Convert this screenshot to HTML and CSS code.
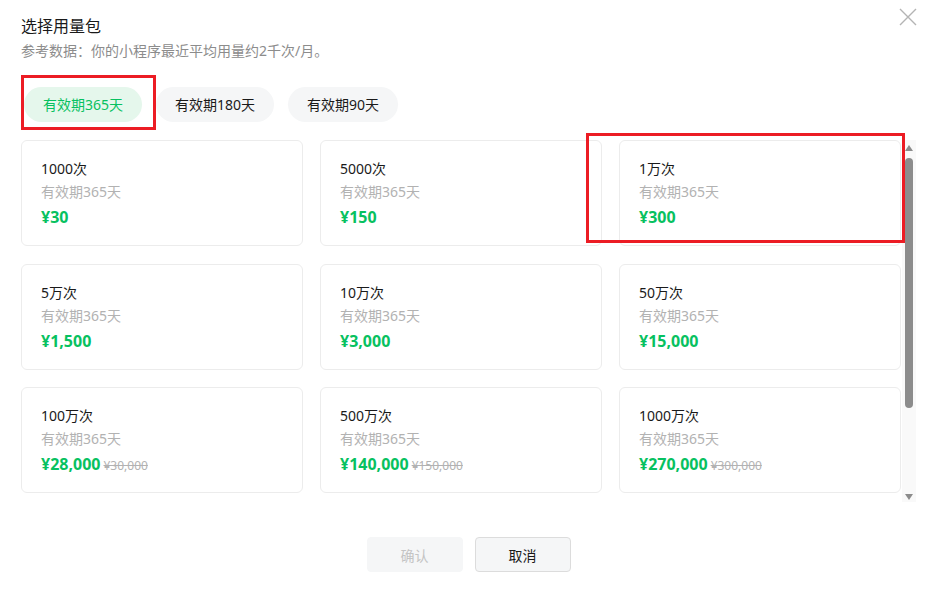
FILE: index.html
```html
<!DOCTYPE html>
<html lang="zh-CN">
<head>
<meta charset="utf-8">
<title>选择用量包</title>
<link rel="stylesheet" href="styles.css">
</head>
<body>
<div class="dialog">
  <button class="close" aria-label="关闭">
    <svg width="18" height="18" viewBox="0 0 18 18"><path d="M1 1L17 17M17 1L1 17" stroke="#b4b4b4" stroke-width="1.4" fill="none"/></svg>
  </button>
  <div class="title">选择用量包</div>
  <div class="subtitle">参考数据：你的小程序最近平均用量约2千次/月。</div>
  <div class="tabs">
    <div class="tab active">有效期365天</div>
    <div class="tab">有效期180天</div>
    <div class="tab">有效期90天</div>
  </div>
  <div class="scroll">
    <div class="grid">
      <div class="card"><div class="name">1000次</div><div class="valid">有效期365天</div><div class="price">¥30</div></div>
      <div class="card"><div class="name">5000次</div><div class="valid">有效期365天</div><div class="price">¥150</div></div>
      <div class="card"><div class="name">1万次</div><div class="valid">有效期365天</div><div class="price">¥300</div></div>
      <div class="card"><div class="name">5万次</div><div class="valid">有效期365天</div><div class="price">¥1,500</div></div>
      <div class="card"><div class="name">10万次</div><div class="valid">有效期365天</div><div class="price">¥3,000</div></div>
      <div class="card"><div class="name">50万次</div><div class="valid">有效期365天</div><div class="price">¥15,000</div></div>
      <div class="card"><div class="name">100万次</div><div class="valid">有效期365天</div><div class="price">¥28,000<span class="orig">¥30,000</span></div></div>
      <div class="card"><div class="name">500万次</div><div class="valid">有效期365天</div><div class="price">¥140,000<span class="orig">¥150,000</span></div></div>
      <div class="card"><div class="name">1000万次</div><div class="valid">有效期365天</div><div class="price">¥270,000<span class="orig">¥300,000</span></div></div>
    </div>
    <div class="scrollbar">
      <svg class="arrow" width="8" height="6" viewBox="0 0 8 6"><path d="M4 0L8 6H0Z" fill="#8c8c8c"/></svg>
      <div class="thumb"></div>
      <div class="spacer"></div>
      <svg class="arrow" width="8" height="6" viewBox="0 0 8 6"><path d="M0 0H8L4 6Z" fill="#8c8c8c"/></svg>
    </div>
  </div>
  <div class="footer">
    <button class="btn disabled">确认</button>
    <button class="btn cancel">取消</button>
  </div>
  <div class="mark mark-tab"></div>
  <div class="mark mark-card"></div>
</div>
</body>
</html>
```
FILE: styles.css
```css
* { box-sizing: border-box; }
html, body { margin: 0; padding: 0; background: #fff; }
body {
  font-family: "Noto Sans", "Noto Sans CJK SC", sans-serif;
  color: #1a1a1a;
}
.dialog {
  position: relative;
  width: 929px;
  height: 592px;
  padding: 14px 13px 0 21px;
}
.close {
  position: absolute;
  top: 8px;
  right: 12px;
  width: 18px;
  height: 18px;
  padding: 0;
  border: 0;
  background: none;
  display: block;
}
.close svg { display: block; }
.title {
  font-size: 16px;
  line-height: 24px;
  color: #1a1a1a;
}
.subtitle {
  margin-top: 3px;
  font-size: 14px;
  line-height: 20px;
  color: #8c8c8c;
}
.tabs {
  margin-top: 26px;
  display: flex;
  gap: 14px;
  padding-left: 3px;
}
.tab {
  height: 35px;
  line-height: 35px;
  padding: 0 19px;
  border-radius: 18px;
  background: #f5f6f7;
  font-size: 14px;
  color: #1a1a1a;
}
.tab.active {
  background: #e5f7ec;
  color: #07c160;
}
.scroll {
  margin-top: 18px;
  height: 362px;
  display: flex;
  gap: 1px;
}
.grid {
  width: 880px;
  height: 362px;
  overflow: hidden;
  display: grid;
  grid-template-columns: repeat(3, 282px);
  grid-auto-rows: 106px;
  column-gap: 17px;
  row-gap: 17.5px;
}
.card {
  border: 1px solid #ececec;
  border-radius: 6px;
  padding: 17px 19px;
}
.name {
  font-size: 14px;
  line-height: 22px;
  color: #1a1a1a;
}
.valid {
  margin-top: 1px;
  font-size: 14px;
  line-height: 22px;
  color: #b2b2b2;
}
.price {
  margin-top: 1px;
  font-size: 16px;
  line-height: 26px;
  font-weight: 700;
  color: #07c160;
}
.orig {
  margin-left: 3px;
  font-size: 12px;
  font-weight: 400;
  color: #b2b2b2;
  text-decoration: line-through;
}
.scrollbar {
  width: 14px;
  height: 362px;
  background: #f9f9f9;
  display: flex;
  flex-direction: column;
  align-items: center;
  padding: 5px 0 2px;
}
.arrow { display: block; flex: none; }
.thumb {
  margin-top: 7px;
  width: 8px;
  height: 250px;
  border-radius: 4px;
  background: #8c8c8c;
  flex: none;
}
.spacer { flex: 1; }
.footer {
  margin-top: 35px;
  display: flex;
  justify-content: center;
  gap: 12px;
}
.btn {
  width: 96px;
  height: 35px;
  border-radius: 4px;
  font-family: inherit;
  font-size: 14px;
  padding: 0;
  background: #f5f6f7;
  border: 1px solid #f5f6f7;
}
.btn.disabled { color: #c4c4c4; }
.btn.cancel { color: #1a1a1a; border-color: #dcdcdc; }
.mark {
  position: absolute;
  border: 3px solid #ec1c24;
  pointer-events: none;
}
.mark-tab { left: 21px; top: 75px; width: 135px; height: 55px; }
.mark-card { left: 586px; top: 133px; width: 319px; height: 110px; }
```
